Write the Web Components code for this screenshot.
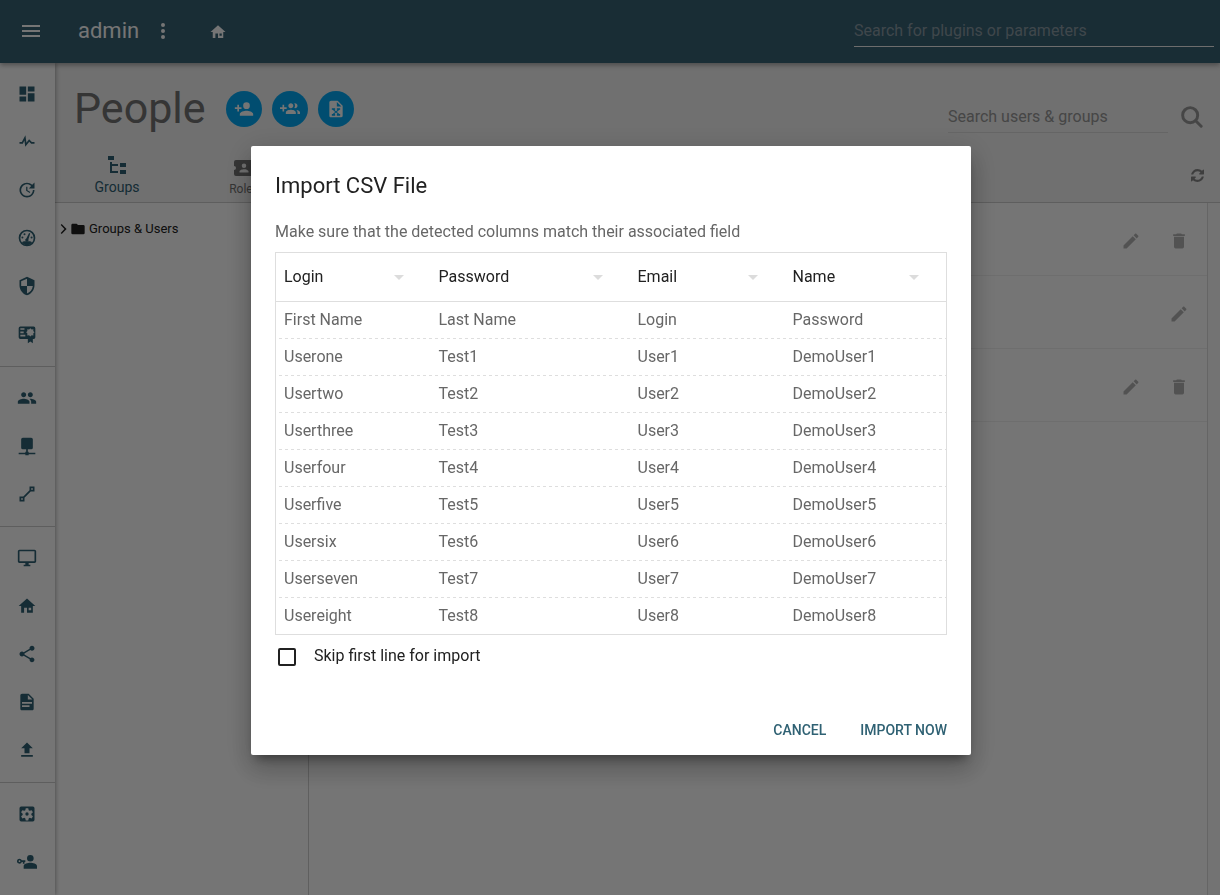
<!DOCTYPE html>
<html lang="en">
<head>
<meta charset="utf-8">
<title>People</title>
<style>
  html, body { height: 100%; margin: 0; }
  body { font-family: Roboto, "Noto Sans", sans-serif; font-size: 16px; color: #212121; --primary: #2f6173; --line: #dedede; --app-bg: #fff; }
</style>
</head>
<body>
<admin-app></admin-app>
<modal-layer>
  <import-dialog></import-dialog>
</modal-layer>
<script>
const ICONS = {
  menu: '<path d="M3 18h18v-2H3v2zm0-5h18v-2H3v2zm0-7v2h18V6H3z"/>',
  more: '<path d="M12 8a2 2 0 1 0 0-4 2 2 0 0 0 0 4zm0 2a2 2 0 1 0 0 4 2 2 0 0 0 0-4zm0 6a2 2 0 1 0 0 4 2 2 0 0 0 0-4z"/>',
  home: '<path fill-rule="evenodd" d="M12 3L2 12h3v8h3.500v-6H12v6h7v-8h3L12 3zm2 11h3v3h-3z"/>',
  dashboard: '<path d="M13 3v6h8V3m-8 18h8V11h-8M3 21h8v-6H3m0-2h8V3H3v10z"/>',
  pulse: '<path d="M3 11h2.8l4.3-8.2 1.2 9 3.2-4.1L17.8 11H21v2h-4l-2.3-2.3-4.8 6-1-7.4L7 13H3z" transform="translate(0 1)"/>',
  update: '<path d="M21 10.12h-6.78l2.74-2.82c-2.73-2.7-7.15-2.8-9.88-.1-2.73 2.71-2.73 7.08 0 9.8 2.73 2.7 7.15 2.7 9.88 0C18.32 15.65 19 14.08 19 12.1h2c0 1.98-.88 4.55-2.64 6.29-3.51 3.48-9.21 3.48-12.72 0-3.5-3.47-3.53-9.11-.02-12.58 3.51-3.47 9.14-3.47 12.65 0L21 3v7.12M12.5 8v4.25l3.5 2.08-.72 1.21L11 13V8h1.5z"/>',
  gauge: '<circle cx="12" cy="12" r="9" fill="none" stroke="currentColor" stroke-width="2"/><path d="M6 17c2-2 4-1 6-1s4-1 6 1c-1 2-3.500 3.500-6 3.500S7 19 6 17z"/><circle cx="6.500" cy="11.500" r="1.200"/><circle cx="9" cy="7.500" r="1.200"/><circle cx="17.500" cy="11.500" r="1.200"/><path d="M14.500 6l1.400.6-2.200 7a2 2 0 1 1-2.500-1z"/>',
  shield: '<path d="M12 1L3 5v6c0 5.550 3.840 10.740 9 12 5.160-1.260 9-6.450 9-12V5l-9-4m0 11h7c-.53 4.110-3.280 7.780-7 8.920V12H5V6.300l7-3.110V12z"/>',
  certificate: '<path fill-rule="evenodd" d="M4 3h16a2 2 0 0 1 2 2v11a2 2 0 0 1-2 2h-1v5l-3-2-3 2v-5H4a2 2 0 0 1-2-2V5a2 2 0 0 1 2-2zm0 2v2h5V5zm0 4v2h4V9zm0 4v2h6v-2zm12-8l-1.500 1.500-2.200-.2.200 2.200L11 10l1.500 1.500-.2 2.200 2.200-.2L16 15l1.500-1.500 2.200.2-.2-2.200L21 10l-1.500-1.500.2-2.200-2.200.2z"/>',
  people: '<path d="M16 11c1.660 0 2.990-1.340 2.990-3S17.660 5 16 5s-3 1.340-3 3 1.340 3 3 3zm-8 0c1.660 0 2.990-1.340 2.990-3S9.660 5 8 5 5 6.340 5 8s1.340 3 3 3zm0 2c-2.330 0-7 1.170-7 3.500V19h14v-2.500c0-2.330-4.670-3.500-7-3.500zm8 0c-.29 0-.62.02-.97.05 1.160.84 1.970 1.970 1.970 3.450V19h6v-2.500c0-2.330-4.670-3.500-7-3.500z"/>',
  network: '<path d="M7 2h10a2 2 0 0 1 2 2v10a2 2 0 0 1-2 2h-4v3h1v1h8v2h-8v1h-4v-1H2v-2h8v-1h1v-3H7a2 2 0 0 1-2-2V4a2 2 0 0 1 2-2z"/>',
  vector: '<path d="M15 3v4.590L7.590 15H3v6h6v-4.580L16.420 9H21V3m-4 2h2v2h-2M5 17h2v2H5"/>',
  desktop: '<path d="M21 2H3c-1.100 0-2 .9-2 2v12c0 1.100.9 2 2 2h7v2H8v2h8v-2h-2v-2h7c1.100 0 2-.9 2-2V4c0-1.100-.9-2-2-2zm0 14H3V4h18v12z"/>',
  share: '<path d="M18 16.080c-.76 0-1.440.3-1.960.77L8.910 12.700c.05-.23.09-.46.09-.7s-.04-.47-.09-.7l7.050-4.110c.54.5 1.250.81 2.040.81 1.660 0 3-1.340 3-3s-1.340-3-3-3-3 1.340-3 3c0 .24.04.47.09.7L8.040 9.810C7.500 9.310 6.790 9 6 9c-1.660 0-3 1.340-3 3s1.340 3 3 3c.79 0 1.500-.31 2.040-.81l7.120 4.160c-.05.21-.08.43-.08.65 0 1.610 1.310 2.920 2.920 2.920s2.920-1.310 2.920-2.920-1.310-2.920-2.920-2.920z"/>',
  file: '<path d="M14 2H6c-1.100 0-2 .9-2 2v16c0 1.100.9 2 2 2h12c1.100 0 2-.9 2-2V8l-6-6zm1 16H6v-2h9v2zm3-4H6v-2h12v2zm-5-5V3.500L18.500 9H13z"/>',
  upload: '<path d="M9 16v-6H5l7-7 7 7h-4v6H9m-4 4v-2h14v2H5z"/>',
  settings: '<path fill-rule="evenodd" d="M5 3h14a2 2 0 0 1 2 2v14a2 2 0 0 1-2 2H5a2 2 0 0 1-2-2V5a2 2 0 0 1 2-2zm5.500 2l-.5 2.500-1.200.7-2.400-.8-1.500 2.600 1.900 1.700v1.400l-1.900 1.700 1.500 2.600 2.400-.8 1.200.7.5 2.500h3l.5-2.500 1.200-.7 2.400.8 1.500-2.600-1.900-1.700v-1.400l1.900-1.700-1.500-2.600-2.400.8-1.200-.7L13.500 5z"/><circle cx="12" cy="12" r="2"/>',
  keyuser: '<path fill-rule="evenodd" d="M16 11.500a4 4 0 1 0 0-8 4 4 0 0 0 0 8zm0 1.500c-3 0-8 1.300-8 4v3h16v-3c0-2.700-5-4-8-4zM3 8a3 3 0 1 0 2.800 4H7v2h2v-2h1v-2H5.800A3 3 0 0 0 3 8zm0 2a1 1 0 1 1 0 2 1 1 0 0 1 0-2z"/>',
  useradd: '<path d="M15 14c-2.670 0-8 1.330-8 4v2h16v-2c0-2.670-5.330-4-8-4m-9-4V7H4v3H1v2h3v3h2v-3h3v-2m6 2a4 4 0 1 0 0-8 4 4 0 0 0 0 8z"/>',
  groupadd: '<path d="M8 10H5V7H3v3H0v2h3v3h2v-3h3v-2zm10 1c1.660 0 2.990-1.340 2.990-3S19.660 5 18 5c-.32 0-.63.05-.91.14.57.81.9 1.790.9 2.860s-.34 2.040-.9 2.860c.28.09.59.14.91.14zm-5 0c1.660 0 2.990-1.340 2.990-3S14.660 5 13 5s-3 1.340-3 3 1.340 3 3 3zm6.620 2.160c.83.73 1.380 1.660 1.380 2.840v2h3v-2c0-1.540-2.370-2.490-4.380-2.840zM13 13c-2 0-6 1-6 3v2h12v-2c0-2-4-3-6-3z"/>',
  excel: '<path fill-rule="evenodd" d="M13 9h5.500L13 3.500V9M6 2h8l6 6v12a2 2 0 0 1-2 2H6c-1.110 0-2-.9-2-2V4c0-1.110.89-2 2-2m11 9h-4v2h1l-2 1.670L10 13h1v-2H7v2h1l3 2.500L8 18H7v2h4v-2h-1l2-1.670L14 18h-1v2h4v-2h-1l-3-2.500 3-2.500h1v-2z"/>',
  tree: '<path d="M3 3h6v4H3V3m12 7h6v4h-6v-4m0 7h6v4h-6v-4m-2-4H7v5h6v2H5V9h2v2h6v2z"/>',
  ticket: '<path fill-rule="evenodd" d="M4 4h16a2 2 0 0 1 2 2v4a2 2 0 0 0 0 4v4a2 2 0 0 1-2 2H4a2 2 0 0 1-2-2v-4a2 2 0 0 0 0-4V6a2 2 0 0 1 2-2zm8 3.500a2.250 2.250 0 1 0 0 4.500 2.250 2.250 0 0 0 0-4.500zM7.500 16.500h9v-1c0-1.500-3-2.300-4.500-2.300s-4.500.8-4.500 2.300z"/>',
  pencil: '<path d="M20.710 7.040c.39-.39.39-1.040 0-1.410l-2.340-2.340c-.37-.39-1.020-.39-1.410 0l-1.840 1.830 3.750 3.750M3 17.250V21h3.750L17.810 9.930l-3.750-3.750L3 17.250z"/>',
  trash: '<path d="M19 4h-3.500l-1-1h-5l-1 1H5v2h14V4M6 19a2 2 0 0 0 2 2h8a2 2 0 0 0 2-2V7H6v12z"/>',
  folder: '<path d="M10 4H4c-1.110 0-2 .89-2 2v12a2 2 0 0 0 2 2h16a2 2 0 0 0 2-2V8a2 2 0 0 0-2-2h-8l-2-2z"/>',
  chevron: '<path d="M8.590 18L14.170 12 8.590 6 10 4.600l7.400 7.400L10 19.400z"/>',
  search: '<g fill="none" stroke="currentColor" stroke-width="3.200"><circle cx="10" cy="10" r="8.200"/><path stroke-linecap="round" d="M16 16l6 6"/></g>',
  refresh: '<path transform="scale(.015625)" d="M1511 928q0 5-1 7-64 268-268 434.500t-478 166.500q-146 0-282.500-55t-243.500-157l-129 129q-19 19-45 19t-45-19-19-45v-448q0-26 19-45t45-19h448q26 0 45 19t19 45-19 45l-137 137q71 66 161 102t187 36q134 0 250-65t186-179q11-17 53-117 8-23 30-23h192q13 0 22.500 9.500t9.500 22.500zm25-800v448q0 26-19 45t-45 19h-448q-26 0-45-19t-19-45 19-45l138-138q-148-137-349-137-134 0-250 65t-186 179q-11 17-53 117-8 23-30 23h-199q-13 0-22.500-9.500t-9.500-22.500v-7q65-268 270-434.500t480-166.500q146 0 284 55.500t245 156.500l130-129q19-19 45-19t45 19 19 45z"/>'
};

function define(name, html, setup) {
  const template = document.createElement('template');
  template.innerHTML = html;
  customElements.define(name, class extends HTMLElement {
    constructor() {
      super();
      this.attachShadow({ mode: 'open' }).append(template.content.cloneNode(true));
    }
    connectedCallback() { if (setup) setup(this, this.shadowRoot); }
  });
}

define('ui-icon', `<style>
  :host { display: inline-flex; width: var(--size, 20px); height: var(--size, 20px); flex: none; }
  svg { width: 100%; height: 100%; fill: currentColor; }
</style><svg viewBox="0 0 24 24" aria-hidden="true"></svg>`, (host, root) => {
  root.querySelector('svg').innerHTML = ICONS[host.getAttribute('name')];
});

define('icon-button', `<style>
  :host { display: inline-flex; }
  button { display: flex; align-items: center; justify-content: center; border: 0; padding: 0; width: var(--hit, 48px); height: var(--hit, 48px); border-radius: 50%; background: var(--fill, transparent); color: inherit; cursor: pointer; }
</style><button type="button"></button>`, (host, root) => {
  const icon = document.createElement('ui-icon');
  icon.setAttribute('name', host.getAttribute('icon'));
  const button = root.querySelector('button');
  button.replaceChildren(icon);
  button.setAttribute('aria-label', host.getAttribute('label'));
});

define('line-input', `<style>
  :host { display: block; }
  input { box-sizing: border-box; width: 100%; height: 32px; border: 0; border-bottom: 1px solid var(--rule, #ddd); padding: 0; background: transparent; color: inherit; font: inherit; outline: 0; display: block; }
  input::placeholder { color: var(--hint, #999); opacity: 1; }
</style><input type="text">`, (host, root) => {
  const input = root.querySelector('input');
  input.placeholder = host.getAttribute('hint');
  input.setAttribute('aria-label', host.getAttribute('hint'));
});

define('app-header', `<style>
  :host { display: flex; align-items: center; box-sizing: border-box; height: 63px; padding: 0 6px 2px 7px; background: #386275; color: #fff; position: relative; z-index: 2; box-shadow: 0 2px 5px rgba(0,0,0,.35); }
  .title { font-size: 22px; line-height: 28px; margin-left: 23px; }
  icon-button { --size: 24px; }
  icon-button.home { --size: 18px; margin-left: 7px; padding-top: 2px; }
  line-input { margin-left: auto; width: 360px; --rule: #eee; --hint: #8a9ba4; }
</style>
<icon-button icon="menu" label="Menu"></icon-button>
<span class="title">admin</span>
<icon-button icon="more" label="More"></icon-button>
<icon-button class="home" icon="home" label="Home"></icon-button>
<line-input hint="Search for plugins or parameters"></line-input>`);

define('side-nav', `<style>
  :host { display: block; box-sizing: border-box; width: 55px; flex: none; padding-top: 7px; background: var(--app-bg); color: var(--primary); box-shadow: 1px 0 4px rgba(0,0,0,.3); position: relative; z-index: 1; }
  a { display: flex; height: 48px; align-items: center; justify-content: center; padding-right: 1px; color: inherit; }
  hr { border: 0; height: 1px; margin: 8px 0 7px; background: #ccc; }
</style><nav></nav>`, (host, root) => {
  const groups = [['dashboard', 'pulse', 'update', 'gauge', 'shield', 'certificate'], ['people', 'network', 'vector'], ['desktop', 'home', 'share', 'file', 'upload'], ['settings', 'keyuser']];
  root.querySelector('nav').innerHTML = groups.map(g => g.map(n => `<a href="#${n}" aria-label="${n}"><ui-icon name="${n}"></ui-icon></a>`).join('')).join('<hr>');
});

define('tab-item', `<style>
  :host { display: flex; width: 126px; }
  button { flex: 1; display: flex; flex-direction: column; align-items: center; justify-content: flex-end; border: 0; padding: 0 0 4px; background: none; font: inherit; font-size: 12px; line-height: 18px; color: #737373; --size: 24px; }
  :host([active]) button { font-size: 14px; line-height: 20px; padding-bottom: 5px; color: var(--primary); }
</style><button type="button"><ui-icon></ui-icon><slot></slot></button>`, (host, root) => {
  const icon = document.createElement('ui-icon');
  icon.setAttribute('name', host.getAttribute('icon'));
  root.querySelector('ui-icon').replaceWith(icon);
});

define('page-heading', `<style>
  :host { display: block; background: #f3f3f3; border-bottom: 1px solid #ccc; }
  .top { display: flex; align-items: center; height: 86px; padding: 0 4px 0 19px; }
  h1 { margin: 4px 20px 0 0; font-size: 43px; line-height: 48px; font-weight: 400; color: #737373; }
  .actions { display: flex; gap: 10px; margin-top: 6px; color: #fff; --hit: 36px; --fill: #03a9f4; }
  .find { display: flex; align-items: center; margin: 22px 0 0 auto; color: #999; }
  .find line-input { width: 220px; --hint: #999; }
  .find icon-button { --size: 22px; }
  .bottom { display: flex; justify-content: space-between; height: 53px; }
  .bottom > icon-button { --size: 13px; --hit: 44px; color: #888; margin: 4px 1px 0 0; }
  .tabs { display: flex; gap: 1px; margin-left: -1px; }
</style>
<div class="top"><h1>People</h1>
  <div class="actions"><icon-button icon="useradd" label="Create user"></icon-button><icon-button icon="groupadd" label="Create group"></icon-button><icon-button icon="excel" label="Import CSV"></icon-button></div>
  <div class="find"><line-input hint="Search users &amp; groups"></line-input><icon-button icon="search" label="Search"></icon-button></div></div>
<div class="bottom"><div class="tabs"><tab-item icon="tree" active>Groups</tab-item><tab-item icon="ticket">Roles</tab-item></div>
  <icon-button icon="refresh" label="Refresh"></icon-button></div>`);

define('group-tree', `<style>
  :host { display: block; box-sizing: border-box; width: 254px; flex: none; border-right: 1px solid #d0d0d0; background: var(--app-bg); padding: 16px 0 0; font-size: 13px; line-height: 20px; color: #212121; }
  a { display: flex; align-items: center; color: inherit; text-decoration: none; --size: 16px; }
  ui-icon { margin-left: -1px; }
  span { margin-left: 3px; }
  ui-icon:first-child { margin-left: 0; }
</style><a href="#groups"><ui-icon name="chevron"></ui-icon><ui-icon name="folder"></ui-icon><span>Groups &amp; Users</span></a>`);

define('people-list', `<style>
  :host { display: block; flex: 1; background: var(--app-bg); border-right: 1px solid #ddd; margin-right: 12px; }
  .row { display: flex; align-items: center; justify-content: flex-end; box-sizing: border-box; height: 73px; padding: 4px 4px 0 0; border-bottom: 1px solid #f0f0f0; color: #b4b4b4; }
</style>
<div class="row"><icon-button icon="pencil" label="Edit"></icon-button><icon-button icon="trash" label="Delete"></icon-button></div>
<div class="row"><icon-button icon="pencil" label="Edit"></icon-button></div>
<div class="row"><icon-button icon="pencil" label="Edit"></icon-button><icon-button icon="trash" label="Delete"></icon-button></div>`);

define('admin-app', `<style>
  :host { display: flex; flex-direction: column; height: 100vh; background: #fafafa; overflow: hidden; }
  .body { display: flex; flex: 1; min-height: 0; }
  main { flex: 1; display: flex; flex-direction: column; background: #fafafa; min-width: 0; }
  .panes { flex: 1; display: flex; }
</style>
<app-header></app-header>
<div class="body"><side-nav></side-nav>
  <main><page-heading></page-heading><div class="panes"><group-tree></group-tree><people-list></people-list></div></main></div>`);

define('modal-layer', `<style>
  :host { position: fixed; inset: 0; z-index: 10; display: flex; align-items: center; justify-content: center; padding: 6px 0 0 2px; background: rgba(0,0,0,.54); }
</style><slot></slot>`);

define('column-select', `<style>
  :host { display: grid; align-items: center; }
  select, svg { grid-area: 1 / 1; }
  select { appearance: none; width: 100%; height: 32px; border: 0; padding: 0; background: none; color: #212121; font: inherit; outline: 0; }
  svg { justify-self: end; width: 10px; height: 5px; margin-right: 27px; fill: #dcdcdc; pointer-events: none; }
</style><select></select><svg viewBox="0 0 10 5" aria-hidden="true"><path d="M0 0h10L5 5z"/></svg>`, (host, root) => {
  const select = root.querySelector('select');
  select.innerHTML = ['Login', 'Password', 'Email', 'Name'].map(o => `<option>${o}</option>`).join('');
  select.value = host.getAttribute('value');
  select.setAttribute('aria-label', 'Field for column ' + host.getAttribute('column'));
});

define('csv-preview', `<style>
  :host { display: block; }
  table { width: 100%; table-layout: fixed; border-collapse: collapse; border: 1px solid var(--line); color: #676767; line-height: 20px; }
  th { height: 49px; box-sizing: border-box; padding: 0 0 0 8px; font-weight: 400; text-align: left; border-bottom: 1px solid var(--line); }
  td { box-sizing: border-box; height: 37px; padding: 0 0 0 8px; }
  tbody tr:not(:last-child) { background: repeating-linear-gradient(90deg, transparent 0 3px, var(--line) 3px 6px) bottom / 100% 1px no-repeat; }
  .a { width: 155px; } .b { width: 199px; }
</style>
<table><colgroup><col class="a"><col class="b"><col class="a"><col></colgroup><thead><tr></tr></thead><tbody></tbody></table>`, (host, root) => {
  root.querySelector('thead tr').innerHTML = ['Login', 'Password', 'Email', 'Name'].map((v, i) => `<th scope="col"><column-select value="${v}" column="${i + 1}"></column-select></th>`).join('');
  const rows = [['First Name', 'Last Name', 'Login', 'Password']];
  ['one', 'two', 'three', 'four', 'five', 'six', 'seven', 'eight'].forEach((w, i) => rows.push(['User' + w, 'Test' + (i + 1), 'User' + (i + 1), 'DemoUser' + (i + 1)]));
  root.querySelector('tbody').innerHTML = rows.map(r => `<tr>${r.map(c => `<td>${c}</td>`).join('')}</tr>`).join('');
});

define('import-dialog', `<style>
  :host { display: block; box-sizing: border-box; width: 720px; max-width: 90%; padding: 24px 24px 8px; background: #fff; border-radius: 2px; box-shadow: 0 16px 24px 2px rgba(0,0,0,.14), 0 6px 30px 5px rgba(0,0,0,.12), 0 8px 10px -5px rgba(0,0,0,.4); }
  h2 { margin: 0; font-size: 22px; line-height: 32px; font-weight: 400; }
  p { margin: 20px 0 10px; line-height: 20px; color: #676767; }
  label { display: flex; align-items: center; gap: 18px; height: 24px; margin: 10px 0 0 3px; }
  label span { line-height: 20px; padding-bottom: 2px; }
  input { appearance: none; box-sizing: border-box; width: 18px; height: 18px; margin: 0; border: 2px solid #212121; border-radius: 2px; }
  footer { display: flex; justify-content: flex-end; gap: 34px; margin-top: 44px; }
  button { height: 34px; border: 0; padding: 0; background: none; color: var(--primary); font: inherit; font-size: 14px; font-weight: 500; text-transform: uppercase; }
</style>
<div role="dialog" aria-labelledby="title">
  <h2 id="title">Import CSV File</h2>
  <p>Make sure that the detected columns match their associated field</p>
  <csv-preview></csv-preview>
  <label for="skip"><input type="checkbox" id="skip"><span>Skip first line for import</span></label>
  <footer><button type="button">Cancel</button><button type="button">Import now</button></footer>
</div>`);
</script>
</body>
</html>
